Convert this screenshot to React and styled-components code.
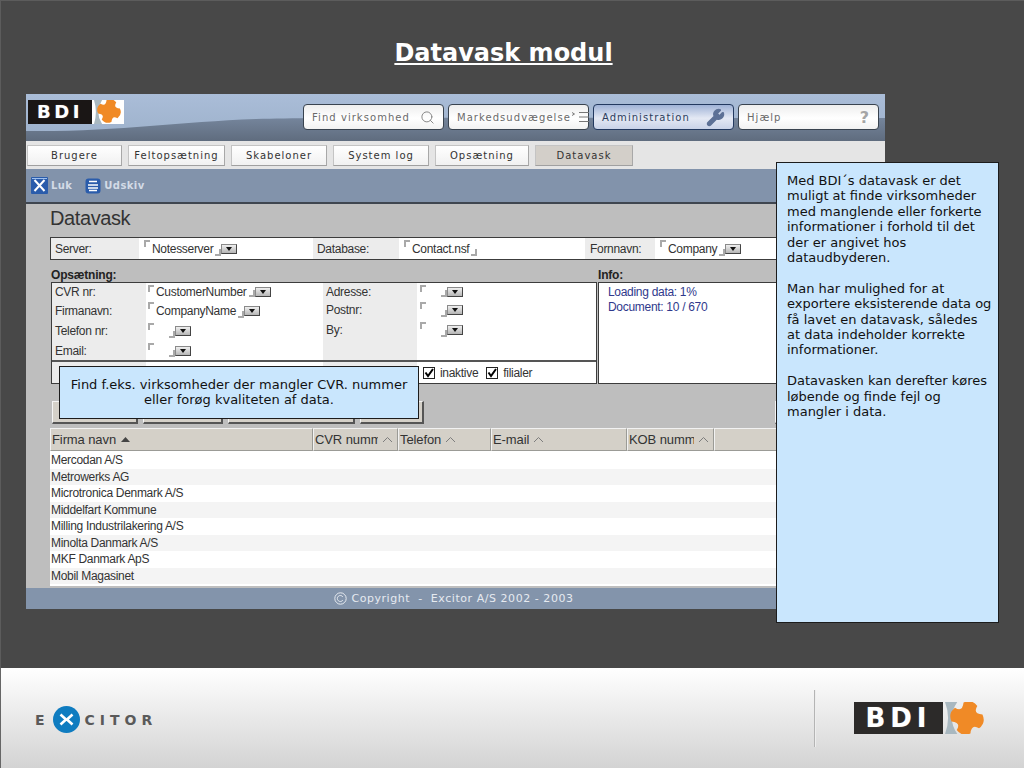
import React from 'react'
import styled, { createGlobalStyle } from 'styled-components'
import { Search, Wrench } from 'lucide-react'

const Global = createGlobalStyle`
  html, body { margin: 0; padding: 0; background: #484848; }
  * { box-sizing: border-box; }
`

const Page = styled.div`
  width: 1024px;
  height: 768px;
  overflow: hidden;
  display: flex;
  flex-direction: column;
  font-family: "Liberation Sans", Arial, sans-serif;
`

const Slide = styled.div`
  position: relative;
  height: 668px;
  background: #484848;
  border-left: 1px solid #5c5c5c;
  border-top: 1px solid #5c5c5c;
  padding-left: 25px;
`

const Title = styled.h1`
  height: 93px;
  margin: 0;
  padding: 34px 0 0;
  width: 955px;
  text-align: center;
  font: bold 24px/36px "DejaVu Sans", Verdana, sans-serif;
  color: #fff;
  text-decoration: underline;
`

const Panel = styled.div`
  width: 859px;
  height: 515px;
  display: flex;
  flex-direction: column;
`

// header

const Header = styled.div`
  position: relative;
  height: 47px;
  flex: none;
  display: flex;
  align-items: flex-start;
  padding: 6px 0 0 2px;
  background: #a9bdd7;
`

const Swoosh = styled.svg`
  position: absolute;
  left: 0;
  top: 0;
`

const SmallLogo = styled.div`
  position: relative;
  display: flex;
  height: 24px;
  width: 96px;
`

const LogoBox = styled.div`
  display: flex;
  align-items: center;
  justify-content: center;
  flex: none;
  width: ${p => p.$w}px;
  background: ${p => p.$bg};
  color: #fff;
  font: bold ${p => p.$size}px/1 "DejaVu Sans", sans-serif;
  letter-spacing: ${p => p.$spacing}px;
  text-shadow: 0 0 1px #777;
`

const LogoMark = styled.svg`
  flex: none;
  display: block;
`

const NavBar = styled.div`
  position: relative;
  display: flex;
  gap: 4px;
  margin: 4px 0 0 179px;
`

const NavBtn = styled.div`
  width: 141px;
  height: 26px;
  padding: 0 8px;
  display: flex;
  align-items: center;
  justify-content: space-between;
  border-radius: 4px;
  border: 1px solid ${p => (p.$active ? '#23395f' : '#39434f')};
  background: ${p => (p.$active
    ? 'linear-gradient(#9fb2d6, #e4e9f4 55%, #c9d3e8)'
    : 'linear-gradient(#eeeeee, #ffffff 55%, #f2f2f2)')};
  font: 10px "DejaVu Sans", Verdana, sans-serif;
  letter-spacing: 1.05px;
  color: ${p => (p.$active ? '#2c3d5c' : '#6a6a6a')};
  svg { flex: none; }
`

const Help = styled.span`
  font: bold 16px "DejaVu Sans", sans-serif;
  color: #a5a5a5;
`

// tabs

const TabBand = styled.div`
  height: 28px;
  flex: none;
  display: flex;
  align-items: flex-start;
  gap: 6px;
  padding: 4px 0 0 1px;
  background: #e5e5e5;
`

const Tab = styled.div`
  width: ${p => p.$w}px;
  height: 21px;
  display: flex;
  align-items: center;
  justify-content: center;
  border: 1px solid #c4c4c4;
  border-right-color: #a8a8a8;
  border-bottom-color: #a0a0a0;
  background: ${p => (p.$active ? '#d3cfc9' : 'linear-gradient(#ffffff, #f1f1f1)')};
  font: 10px "DejaVu Sans", Verdana, sans-serif;
  letter-spacing: 1px;
  color: #333;
`

// toolbar

const Toolbar = styled.div`
  height: 35px;
  flex: none;
  display: flex;
  align-items: center;
  gap: 13px;
  padding: 0 0 0 5px;
  background: #8293ab;
  border-bottom: 2px solid #3f4650;
`

const ToolItem = styled.div`
  display: flex;
  align-items: center;
  gap: 3px;
  font: bold 10px "DejaVu Sans", Verdana, sans-serif;
  letter-spacing: .4px;
  color: #d3dbe6;
`

// content

const Content = styled.div`
  flex: 1;
  min-height: 0;
  background: #bebebe;
  padding-left: 24px;
  overflow: hidden;
  font-size: 12px;
  letter-spacing: -.3px;
  color: #333;
`

const Heading = styled.div`
  height: 33px;
  font-size: 20px;
  line-height: 29px;
  letter-spacing: -.4px;
`

const ServerBox = styled.div`
  width: 810px;
  height: 23px;
  display: grid;
  grid-template-columns: 88px 174px 86px 186px 70px 1fr;
  border: 2px solid #3c3c3c;
  border-width: 1.5px;
  background: #fff;
`

const SectionRow = styled.div`
  height: 22px;
  display: grid;
  grid-template-columns: 547px 1fr;
  align-items: end;
  font-weight: bold;
  letter-spacing: -.2px;
  color: #222;
  padding-left: 1px;
`

const Cell = styled.div`
  display: flex;
  align-items: center;
  padding-left: ${p => p.$pad ?? 4}px;
  background: ${p => (p.$label ? '#ececec' : '#fff')};
`

const Corner = styled.i`
  display: block;
  flex: none;
  width: 6px;
  height: 7px;
  border: 0 solid #a9a9a9;
  align-self: ${p => (p.$end ? 'flex-end' : 'flex-start')};
  margin: ${p => (p.$end ? '0 0 3px 2px' : '2px 2px 0 0')};
  ${p => (p.$end
    ? 'border-right-width: 2px; border-bottom-width: 2px;'
    : 'border-left-width: 2px; border-top-width: 2px;')}
`

const Drop = styled.span`
  flex: none;
  width: 16px;
  height: 10px;
  display: flex;
  align-items: center;
  justify-content: center;
  background: linear-gradient(#efefef, #b5b5b5);
  border: 1px solid #8a8a8a;
  border-right-color: #444;
  border-bottom-color: #444;
  &::after {
    content: '';
    border: 3px solid transparent;
    border-top: 4px solid #111;
    border-bottom: 0;
  }
`

const FieldWrap = styled.div`
  display: flex;
  align-items: center;
  height: 100%;
  padding-left: ${p => p.$pad ?? 5}px;
`

const EmptyGap = styled.span`
  width: 11px;
  flex: none;
`

const Boxes = styled.div`
  display: grid;
  grid-template-columns: 546px 1fr;
  gap: 1px;
  width: 810px;
  height: 102px;
  margin-left: 1px;
`

const SetupBox = styled.div`
  display: flex;
  flex-direction: column;
  border: 1.5px solid #3c3c3c;
  background: #fff;
`

const SetupTop = styled.div`
  flex: 1;
  display: grid;
  grid-template-columns: 94px 177px 94px 1fr;
`

const Stack = styled.div`
  display: flex;
  flex-direction: column;
  background: ${p => (p.$label ? '#ececec' : '#fff')};
  padding: ${p => (p.$label ? '0 0 0 3px' : '0')};
`

const StackRow = styled.div`
  height: ${p => p.$h}px;
  display: flex;
  align-items: center;
`

const SetupBottom = styled.div`
  flex: none;
  height: 23px;
  border-top: 2px solid #555;
  display: grid;
  grid-template-columns: 94px 177px 94px 1fr;
`

const CheckRow = styled.div`
  display: flex;
  align-items: center;
  gap: 5px;
  padding-left: 6px;
  font-size: 12px;
`

const CheckBox = styled.span`
  width: 12px;
  height: 12px;
  flex: none;
  display: flex;
  align-items: center;
  justify-content: center;
  background: #fff;
  border: 1px solid #222;
  margin-left: ${p => p.$gap ?? 0}px;
`

const InfoBox = styled.div`
  border: 1.5px solid #3c3c3c;
  background: #fff;
  padding: 2px 0 0 9px;
  color: #30398c;
  line-height: 15px;
`

const ButtonRow = styled.div`
  display: flex;
  gap: 5px;
  width: 810px;
  height: 23px;
  margin: 17px 0 4px 2px;
`

const FormButton = styled.div`
  width: ${p => p.$w}px;
  margin-left: ${p => (p.$right ? 'auto' : '0')};
  background: #d4d0c8;
  border: 1px solid #f4f4f4;
  border-right: 2px solid #555;
  border-bottom: 2px solid #555;
`

const TableHead = styled.div`
  width: 835px;
  height: 23px;
  display: grid;
  grid-template-columns: 263px 85px 93px 136px 87px 1fr;
  background: #d4d0c8;
  font-size: 13px;
  letter-spacing: -.1px;
`

const HeadCell = styled.div`
  display: flex;
  align-items: center;
  gap: 4px;
  padding: 0 4px 0 1px;
  border-top: 1px solid #f2f2f2;
  border-left: 1px solid #f2f2f2;
  border-right: 1px solid #9b9b96;
  border-bottom: 1px solid #9b9b96;
`

const HeadName = styled.span`
  white-space: nowrap;
  overflow: hidden;
  flex: ${p => (p.$fill ? 1 : 'none')};
`

const TableBody = styled.div`
  width: 835px;
  height: 135px;
  background: #fff;
`

const Row = styled.div`
  height: 17px;
  line-height: 17px;
  padding-left: 1px;
  &:first-child { height: 18px; line-height: 19px; }
  &:nth-child(even) { height: 16px; line-height: 16px; background: #f4f4f4; }
`

const PanelFoot = styled.div`
  height: 21px;
  flex: none;
  display: flex;
  align-items: center;
  justify-content: center;
  gap: 4px;
  padding-right: 3px;
  background: #8394ab;
  font: 11px "DejaVu Sans", Verdana, sans-serif;
  letter-spacing: .55px;
  white-space: pre;
  color: #e6eaf0;
`

// callouts

const Callout = styled.div`
  position: absolute;
  left: ${p => p.$left}px;
  top: ${p => p.$top}px;
  width: ${p => p.$w}px;
  height: ${p => p.$h}px;
  padding: ${p => p.$pad};
  background: #c9e6fd;
  border: 1px solid #1c1c1c;
  font: 13px/15.4px "DejaVu Sans", Verdana, sans-serif;
  color: #111;
  text-align: ${p => p.$align || 'left'};
  p { margin: 0 0 15.4px; }
`

// page foot

const Foot = styled.div`
  flex: 1;
  display: flex;
  align-items: center;
  padding: 0 39px 0 34px;
  background: linear-gradient(#ffffff, #d3d3d3);
  border-left: 1px solid #666;
`

const Excitor = styled.div`
  display: flex;
  align-items: center;
  margin-top: 3px;
  font: bold 14px/1 "DejaVu Sans", sans-serif;
  letter-spacing: 5px;
  color: #5a5a5a;
`

const ExcitorDot = styled.svg`
  margin: 0 5px 0 3px;
  flex: none;
`

const FootRight = styled.div`
  margin-left: auto;
  display: flex;
  align-items: center;
`

const Divider = styled.div`
  width: 2px;
  height: 57px;
  margin-right: 38px;
  background: #b4b4b4;
  border-right: 1px solid #eee;
`

const BigLogo = styled.div`
  display: flex;
  height: 32px;
`

// drawings

const Cross = ({ size, boxW, boxH, cx, cy }) => (
  <LogoMark width={boxW} height={boxH} viewBox={`0 0 ${boxW} ${boxH}`}>
    <path
      d={`M2 0 H${size * .42} Q${size * .1} ${boxH / 2} ${size * .42} ${boxH} H2 Q${size * .24} ${boxH / 2} 2 0Z`}
      fill="#a9b8c0"
    />
    <g transform={`translate(${cx} ${cy}) rotate(14) scale(${size / 24})`}>
      <path
        d="M-5 -10 Q0 -14 5 -10 Q3 -4 10 -5 Q14 0 10 5 Q4 3 5 10 Q0 14 -5 10 Q-3 4 -10 5 Q-14 0 -10 -5 Q-4 -3 -5 -10Z"
        fill="#f08a26"
      />
    </g>
  </LogoMark>
)

const ListIcon = () => (
  <svg width="20" height="12" viewBox="0 0 20 12" fill="none" stroke="#777" strokeWidth="1">
    <path d="M1 1.5 L3.5 3 L1 4.5" />
    <path d="M8 1.5H18M8 6H18M8 10.5H18" />
  </svg>
)

const CloseIcon = () => (
  <svg width="17" height="17" viewBox="0 0 17 17">
    <rect width="17" height="17" rx="1" fill="#2a5cab" />
    <path d="M3.5 3 L13.5 14 M13.5 3 L3.5 14" stroke="#fff" strokeWidth="2" />
    <path d="M1 1.5H16" stroke="#9fc0ee" strokeWidth="1" />
  </svg>
)

const PrintIcon = () => (
  <svg width="16" height="16" viewBox="0 0 16 16">
    <rect x=".5" y=".5" width="15" height="15" rx="3" fill="#2a5cab" />
    <path d="M4 3.5H12M3 7H13M3 10H13M4 12.5H12" stroke="#fff" strokeWidth="1.5" />
  </svg>
)

const Check = () => (
  <svg width="10" height="10" viewBox="0 0 10 10" fill="none" stroke="#000" strokeWidth="2">
    <path d="M1.5 4.5 L4 8 L9 1" />
  </svg>
)

const SortUp = ({ filled }) => (
  <svg width="11" height="7" viewBox="0 0 11 7" style={{ flex: 'none' }}>
    {filled
      ? <path d="M1 6 L5.5 1 L10 6Z" fill="#444" />
      : <path d="M1 6 L5.5 1.5 L10 6" fill="none" stroke="#7d7d7d" />}
  </svg>
)

const Field = ({ value, drop = true, pad }) => (
  <FieldWrap $pad={pad}>
    <Corner />
    {value || <EmptyGap />}
    <Corner $end />
    {drop && <Drop />}
  </FieldWrap>
)

const companies = [
  'Mercodan A/S',
  'Metrowerks AG',
  'Microtronica Denmark A/S',
  'Middelfart Kommune',
  'Milling Industrilakering A/S',
  'Minolta Danmark A/S',
  'MKF Danmark ApS',
  'Mobil Magasinet',
]

const columns = [
  { name: 'Firma navn', filled: true },
  { name: 'CVR nummer', fill: true },
  { name: 'Telefon' },
  { name: 'E-mail' },
  { name: 'KOB nummer', fill: true },
]

export default function App() {
  return (
    <Page>
      <Global />
      <Slide>
        <Title>Datavask modul</Title>
        <Panel>
          <Header>
            <Swoosh width="859" height="47" viewBox="0 0 859 47">
              <defs>
                <linearGradient id="low" x1="0" y1="0" x2="0" y2="1">
                  <stop offset="0" stopColor="#75859c" />
                  <stop offset="1" stopColor="#5f6c7e" />
                </linearGradient>
                <linearGradient id="high" x1="0" y1="0" x2="0" y2="1">
                  <stop offset="0" stopColor="#aabdd8" />
                  <stop offset="1" stopColor="#9cb0ca" />
                </linearGradient>
              </defs>
              <rect width="859" height="47" fill="url(#high)" />
              <path d="M0 37 C90 38 150 28 230 25 C300 23 400 24 859 24 V47 H0Z" fill="url(#low)" />
            </Swoosh>
            <SmallLogo>
              <LogoBox $w={64} $bg="#1a1615" $size={18} $spacing={3.5}>BDI</LogoBox>
              <LogoBox $w={32} $bg="#fff" $size={1} $spacing={0}>
                <Cross size={24} boxW={32} boxH={24} cx={17} cy={11} />
              </LogoBox>
            </SmallLogo>
            <NavBar>
              <NavBtn>Find virksomhed<Search size={15} color="#888" strokeWidth={1.6} /></NavBtn>
              <NavBtn>Markedsudvægelse<ListIcon /></NavBtn>
              <NavBtn $active>Administration<Wrench size={19} color="#5d7196" fill="#5d7196" /></NavBtn>
              <NavBtn>Hjælp<Help>?</Help></NavBtn>
            </NavBar>
          </Header>

          <TabBand>
            <Tab $w={95}>Brugere</Tab>
            <Tab $w={97}>Feltopsætning</Tab>
            <Tab $w={96}>Skabeloner</Tab>
            <Tab $w={96}>System log</Tab>
            <Tab $w={94}>Opsætning</Tab>
            <Tab $w={98} $active>Datavask</Tab>
          </TabBand>

          <Toolbar>
            <ToolItem><CloseIcon />Luk</ToolItem>
            <ToolItem><PrintIcon />Udskiv</ToolItem>
          </Toolbar>

          <Content>
            <Heading>Datavask</Heading>
            <ServerBox>
              <Cell $label>Server:</Cell>
              <Cell $pad={0}><Field value="Notesserver" /></Cell>
              <Cell $label>Database:</Cell>
              <Cell $pad={0}><Field value="Contact.nsf" drop={false} /></Cell>
              <Cell $label $pad={5}>Fornnavn:</Cell>
              <Cell $pad={0}><Field value="Company" /></Cell>
            </ServerBox>

            <SectionRow>
              <span>Opsætning:</span>
              <span>Info:</span>
            </SectionRow>

            <Boxes>
              <SetupBox>
                <SetupTop>
                  <Stack $label>
                    <StackRow $h={17}>CVR nr:</StackRow>
                    <StackRow $h={21}>Firmanavn:</StackRow>
                    <StackRow $h={20}>Telefon nr:</StackRow>
                    <StackRow $h={19}>Email:</StackRow>
                  </Stack>
                  <Stack>
                    <StackRow $h={17}><Field value="CustomerNumber" pad={2} /></StackRow>
                    <StackRow $h={21}><Field value="CompanyName" pad={2} /></StackRow>
                    <StackRow $h={20}><Field pad={2} /></StackRow>
                    <StackRow $h={19}><Field pad={2} /></StackRow>
                  </Stack>
                  <Stack $label>
                    <StackRow $h={17}>Adresse:</StackRow>
                    <StackRow $h={20}>Postnr:</StackRow>
                    <StackRow $h={20}>By:</StackRow>
                  </Stack>
                  <Stack>
                    <StackRow $h={17}><Field pad={3} /></StackRow>
                    <StackRow $h={20}><Field pad={3} /></StackRow>
                    <StackRow $h={20}><Field pad={3} /></StackRow>
                  </Stack>
                </SetupTop>
                <SetupBottom>
                  <Stack $label />
                  <Stack />
                  <Stack $label />
                  <CheckRow>
                    <CheckBox><Check /></CheckBox>
                    inaktive
                    <CheckBox $gap={3}><Check /></CheckBox>
                    filialer
                  </CheckRow>
                </SetupBottom>
              </SetupBox>
              <InfoBox>
                Loading data: 1%<br />
                Document: 10 / 670
              </InfoBox>
            </Boxes>

            <ButtonRow>
              <FormButton $w={86} />
              <FormButton $w={80} />
              <FormButton $w={127} />
              <FormButton $w={64} />
              <FormButton $w={87} $right />
            </ButtonRow>

            <TableHead>
              {columns.map(c => (
                <HeadCell key={c.name}>
                  <HeadName $fill={c.fill}>{c.name}</HeadName>
                  <SortUp filled={c.filled} />
                </HeadCell>
              ))}
              <HeadCell />
            </TableHead>
            <TableBody>
              {companies.map(c => <Row key={c}>{c}</Row>)}
            </TableBody>
          </Content>

          <PanelFoot>
            <svg width="13" height="13" viewBox="0 0 13 13" fill="none" stroke="#e6eaf0">
              <circle cx="6.5" cy="6.5" r="5.7" />
              <path d="M8.8 4.8 A3 3 0 1 0 8.8 8.2" />
            </svg>
            {'Copyright  -  Excitor A/S 2002 - 2003'}
          </PanelFoot>
        </Panel>

        <Callout $left={58} $top={365} $w={360} $h={53} $pad="10px 8px 0" $align="center">
          Find f.eks. virksomheder der mangler CVR. nummer<br />
          eller forøg kvaliteten af data.
        </Callout>

        <Callout $left={775} $top={161} $w={223} $h={461} $pad="10px 6px 0 10px">
          <p>Med BDI´s datavask er det muligt at finde virksomheder med manglende eller forkerte informationer i forhold til det der er angivet hos dataudbyderen.</p>
          <p>Man har mulighed for at exportere eksisterende data og få lavet en datavask, således at data indeholder korrekte informationer.</p>
          <p>Datavasken kan derefter køres løbende og finde fejl og mangler i data.</p>
        </Callout>
      </Slide>

      <Foot>
        <Excitor>
          E
          <ExcitorDot width="27" height="27" viewBox="0 0 27 27">
            <circle cx="13.5" cy="13.5" r="13.5" fill="#0f7cc0" />
            <path d="M7.5 8.5 L13 13.5 L7.5 18.5 M19.5 8.5 L14 13.5 L19.5 18.5" fill="none" stroke="#fff" strokeWidth="2.6" />
          </ExcitorDot>
          CITOR
        </Excitor>
        <FootRight>
          <Divider />
          <BigLogo>
            <LogoBox $w={89} $bg="#2c2a29" $size={26} $spacing={5}>BDI</LogoBox>
            <Cross size={34} boxW={42} boxH={32} cx={24} cy={16} />
          </BigLogo>
        </FootRight>
      </Foot>
    </Page>
  )
}
